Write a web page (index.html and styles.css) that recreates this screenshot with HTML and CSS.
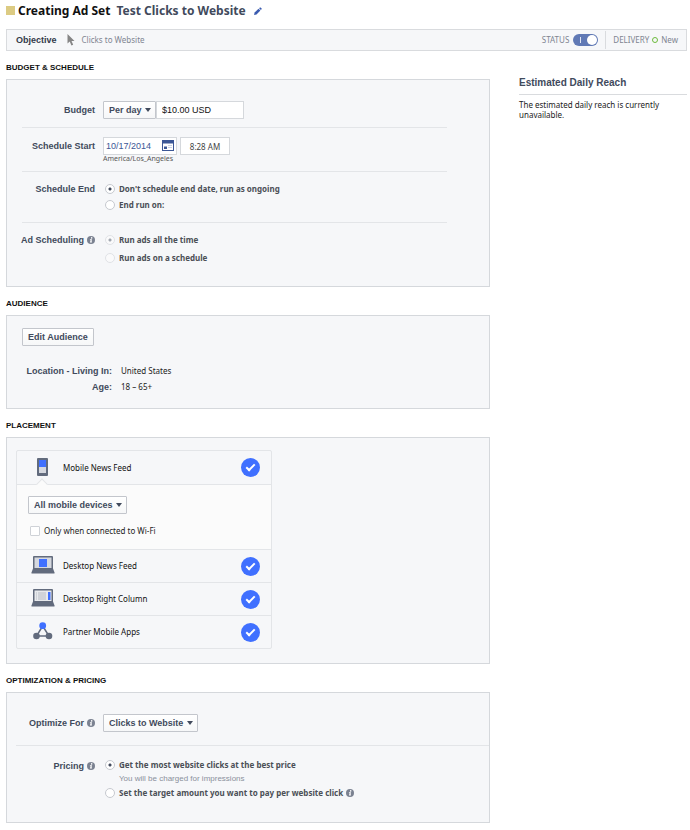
FILE: index.html
```html
<!DOCTYPE html>
<html lang="en">
<head>
<meta charset="utf-8">
<meta name="viewport" content="width=device-width, initial-scale=1">
<title>Creating Ad Set</title>
<link rel="stylesheet" href="styles.css">
</head>
<body>
<svg class="sprite" aria-hidden="true">
  <symbol id="info" viewBox="0 0 16 16"><circle cx="8" cy="8" r="8" fill="#7b8291"/><circle cx="9.3" cy="3.8" r="1.6" fill="#fff"/><path d="M6 6.4h4L8.9 11h1.2l-.4 1.8H5.9L7.2 8H5.7z" fill="#fff"/></symbol>
</svg>

<header class="title">
  <span class="swatch"></span>
  <h1>Creating Ad Set</h1>
  <span class="name">Test Clicks to Website</span>
  <button class="edit" type="button" aria-label="Edit name"><svg viewBox="0 0 16 16"><path d="M0 16l1.2-5L9 3.4l3.8 3.7L5 14.800z" fill="#3a5bb0"/><path d="M10.200 2.300L12.300.3 15.800 3.700 13.800 5.900z" fill="#3a5bb0"/></svg></button>
</header>

<div class="bar">
  <strong>Objective</strong>
  <svg class="cursor" viewBox="0 0 16 24"><path d="M1 0v19l4.500-4 3.300 8 3.600-1.600-3.300-7.600H15z" fill="#858585"/></svg>
  <span class="goal">Clicks to Website</span>
  <label class="status" for="status">STATUS</label>
  <input class="switch" id="status" type="checkbox" role="switch" checked>
  <span class="delivery">DELIVERY <i class="ring"></i> New</span>
</div>

<div class="columns">
<main>
  <h2>BUDGET &amp; SCHEDULE</h2>
  <section class="panel schedule">
    <div class="row budget">
      <label class="label" for="period">Budget</label>
      <div class="controls joined">
        <span class="pick"><select id="period"><option>Per day</option></select></span>
        <input class="text amount" type="text" aria-label="Budget amount" value="$10.00 USD">
      </div>
    </div>
    <div class="row start">
      <label class="label" for="date">Schedule Start</label>
      <div>
        <div class="controls">
          <span class="date"><input class="text" id="date" type="text" value="10/17/2014"><svg viewBox="0 0 24 22"><path d="M0 0h24v22H0z" fill="#3c5796"/><path d="M2 7h20v13H2z" fill="#fff"/><path d="M4 13h6v5H4z" fill="#3c5796"/><path d="M12 10h8v2h-8zM12 14h8v2h-8z" fill="#c9d1e4"/></svg></span>
          <input class="text time" type="text" aria-label="Start time" value="8:28 AM">
        </div>
        <div class="zone">America/Los_Angeles</div>
      </div>
    </div>
    <div class="row end">
      <span class="label" id="end-label">Schedule End</span>
      <div class="choices" role="radiogroup" aria-labelledby="end-label">
        <label><input type="radio" name="end" checked>Don't schedule end date, run as ongoing</label>
        <label><input type="radio" name="end">End run on:</label>
      </div>
    </div>
    <div class="row timing">
      <span class="label" id="timing-label">Ad Scheduling <svg class="info"><use href="#info"/></svg></span>
      <div class="choices loose" role="radiogroup" aria-labelledby="timing-label">
        <label><input type="radio" name="timing" checked disabled>Run ads all the time</label>
        <label><input type="radio" name="timing" disabled>Run ads on a schedule</label>
      </div>
    </div>
  </section>

  <h2>AUDIENCE</h2>
  <section class="panel audience">
    <button class="button" type="button">Edit Audience</button>
    <dl>
      <dt>Location - Living In:</dt><dd>United States</dd>
      <dt>Age:</dt><dd>18 – 65+</dd>
    </dl>
  </section>

  <h2>PLACEMENT</h2>
  <section class="panel placement">
    <div class="places">
      <label class="place open">
        <svg viewBox="0 0 24 20"><path d="M7 0h9q1 0 1 1v16q0 1-1 1H7q-1 0-1-1V1q0-1 1-1z" fill="#626b7d"/><path d="M8 2h7v7H8z" fill="#4070ff"/><path d="M8 9h7v6H8z" fill="#d5d8df"/></svg>
        <span>Mobile News Feed</span><input type="checkbox" checked>
      </label>
      <div class="devices">
        <span class="pick"><select aria-label="Mobile devices"><option>All mobile devices</option></select></span>
        <label class="wifi"><input type="checkbox">Only when connected to Wi-Fi</label>
      </div>
      <label class="place">
        <svg viewBox="0 0 24 20"><path d="M3 0h18q1 0 1 1v12H2V1q0-1 1-1z" fill="#626b7d"/><path d="M3.500 1.500h17V12h-17z" fill="#d5d8df"/><path d="M8 3h8v8H8z" fill="#4070ff"/><path d="M2 12.500h20l1.500 4v1H.500v-1z" fill="#626b7d"/></svg>
        <span>Desktop News Feed</span><input type="checkbox" checked>
      </label>
      <label class="place">
        <svg viewBox="0 0 24 20"><path d="M3 0h18q1 0 1 1v12H2V1q0-1 1-1z" fill="#626b7d"/><path d="M3.500 1.500h17V12h-17z" fill="#e8eaed"/><path d="M5 3h1v8H5zM7 3h8v8H7z" fill="#d0d3d9"/><path d="M17 3h2.500v8H17z" fill="#4070ff"/><path d="M2 12.500h20l1.500 4v1H.500v-1z" fill="#626b7d"/></svg>
        <span>Desktop Right Column</span><input type="checkbox" checked>
      </label>
      <label class="place">
        <svg viewBox="0 0 24 20"><path d="M11.700 4L5.500 14H18z" fill="none" stroke="#626b7d" stroke-width="1.500"/><circle cx="11.700" cy="3.700" r="3.400" fill="#4070ff"/><circle cx="5.500" cy="14" r="3.300" fill="#626b7d"/><circle cx="18" cy="14" r="3.300" fill="#626b7d"/></svg>
        <span>Partner Mobile Apps</span><input type="checkbox" checked>
      </label>
    </div>
  </section>

  <h2>OPTIMIZATION &amp; PRICING</h2>
  <section class="panel">
    <div class="row optimize">
      <label class="label" for="optimize">Optimize For <svg class="info"><use href="#info"/></svg></label>
      <span class="pick"><select id="optimize"><option>Clicks to Website</option></select></span>
    </div>
    <div class="row pricing">
      <span class="label" id="price-label">Pricing <svg class="info"><use href="#info"/></svg></span>
      <div class="choices" role="radiogroup" aria-labelledby="price-label">
        <label><input type="radio" name="price" checked>Get the most website clicks at the best price</label>
        <p class="hint">You will be charged for impressions</p>
        <label><input type="radio" name="price">Set the target amount you want to pay per website click <svg class="info"><use href="#info"/></svg></label>
      </div>
    </div>
  </section>
</main>

<aside>
  <h3>Estimated Daily Reach</h3>
  <p>The estimated daily reach is currently unavailable.</p>
</aside>
</div>
</body>
</html>
```

FILE: styles.css
```css
*, *::before, *::after { box-sizing: border-box; }

:root {
  --humanist: "Lucida Grande", "Noto Sans", sans-serif;
  --grotesque: "Liberation Sans", sans-serif;
  --line: #e3e5e8;
  --ink: #414a5c;
}

body {
  margin: 0;
  padding: 0 3px 6px 6px;
  background: #fff;
  color: #222;
  font: 8px/12px var(--humanist);
}

h1, h2, h3, p, dl, dd { margin: 0; }
button, input, select { margin: 0; font: inherit; color: inherit; }
.sprite { position: absolute; width: 0; height: 0; }

.title {
  display: flex;
  align-items: center;
  height: 21px;
  font: bold 12px/16px var(--humanist);
}
.swatch { width: 9px; height: 9px; margin-right: 3px; background: #dccb83; }
.title h1 { margin-right: 6px; font: inherit; color: #111; }
.title .name { color: var(--ink); }
.edit { display: flex; margin-left: 8px; padding: 0; border: 0; background: none; }
.edit svg { width: 8px; height: 8px; }

.bar {
  display: flex;
  align-items: center;
  height: 22px;
  margin-top: 8px;
  padding: 0 8px 0 9px;
  border: 1px solid #d9dbde;
  background: #f6f7f9;
  color: #7f8591;
}
.bar strong { font: bold 9px/12px var(--grotesque); color: #333b4b; }
.cursor { width: 8px; height: 12px; margin: 0 7px 0 10px; }
.status { margin-left: auto; }
.switch {
  appearance: none;
  position: relative;
  width: 25px;
  height: 12px;
  margin: 0 7px 0 4px;
  border-radius: 6px;
  background: #6079b5;
}
.switch::before, .switch::after { content: ""; position: absolute; }
.switch::before { left: 7px; top: 3px; width: 1px; height: 6px; background: #dfe5f2; }
.switch::after { right: 1px; top: 1px; width: 10px; height: 10px; border-radius: 50%; background: #fff; }
.delivery { display: flex; align-items: center; gap: 3px; height: 18px; padding-left: 7px; border-left: 1px solid #d9dbde; }
.ring { width: 6px; height: 6px; border: 1px solid #6cbb3c; border-radius: 50%; }

.columns { display: flex; align-items: flex-start; gap: 29px; }
main { flex: 1; min-width: 0; }
aside { width: 168px; padding-top: 25px; color: #222; }
aside h3 {
  margin-bottom: 5px;
  padding-bottom: 4px;
  border-bottom: 1px solid #d9dbde;
  font: bold 10px/14px var(--grotesque);
  color: var(--ink);
}
aside p { line-height: 10px; }

h2 { margin: 11px 0 5px; font: bold 8px/12px var(--grotesque); color: #111; }

.panel { border: 1px solid #d5d8dc; background: #f6f7f9; }
.schedule { padding: 0 42px 0 15px; }

.row { display: grid; grid-template-columns: 73px 1fr; column-gap: 8px; border-bottom: 1px solid var(--line); }
.row:last-child { border-bottom: 0; }
.label {
  display: flex;
  justify-content: flex-end;
  align-items: center;
  gap: 3px;
  height: 18px;
  font: bold 9px/18px var(--grotesque);
  color: var(--ink);
  white-space: nowrap;
}
.info { width: 8px; height: 8px; flex: none; }

.controls { display: flex; gap: 3px; }
.joined { gap: 0; }
.budget { padding: 21px 0 8px; }
.start { padding: 9px 0 8px; }
.end { padding: 9px 0 9px; }
.timing { padding: 8px 0 19px; }

.pick { position: relative; display: inline-flex; justify-self: start; }
.pick::after {
  content: "";
  position: absolute;
  right: 5px;
  top: 7px;
  border: 3px solid transparent;
  border-top: 4px solid var(--ink);
  border-bottom: 0;
  pointer-events: none;
}
.pick select, .button {
  appearance: none;
  height: 18px;
  border: 1px solid #c3c6cc;
  border-radius: 1px;
  background: linear-gradient(#fff, #f6f7f8);
  color: var(--ink);
  font: bold 9px/14px var(--grotesque);
}
.pick select { padding: 0 13px 0 5px; }
.button { padding: 0 5px; }

.text {
  width: 50px;
  height: 18px;
  padding: 0 5px;
  border: 1px solid #d5d8dc;
  background: #fff;
}
.amount { width: 88px; font: 9px var(--grotesque); color: #111; }
.date { position: relative; display: flex; }
.date .text { width: 74px; padding: 0 2px; font: 9px var(--grotesque); color: #3c5796; }
.date svg { position: absolute; right: 3px; top: 3px; width: 12px; height: 11px; }
.time { padding: 0 2px; text-align: center; color: #444; }
.zone { font-size: 7px; line-height: 8px; color: #555; }

.choices label { display: flex; align-items: center; height: 16px; font-weight: bold; color: #4b4f56; }
.choices.loose label { height: 18px; }
.choices .info { margin-left: 3px; }
input[type="radio"] {
  appearance: none;
  width: 10px;
  height: 10px;
  margin: 0 4px 0 2px;
  border: 1px solid #c6c9cf;
  border-radius: 50%;
  background: #fff;
}
input[type="radio"]:checked { background: radial-gradient(circle, #414a5c 0 1px, #fff 2px); }
input[type="radio"]:disabled { opacity: .45; }
.end .label { height: 16px; }

.audience { padding: 12px 15px 13px; }
.audience dl {
  display: grid;
  grid-template-columns: 90px 1fr;
  column-gap: 9px;
  margin-top: 17px;
  line-height: 16px;
}
.audience .button { display: block; }
dt { text-align: right; font: bold 9px/16px var(--grotesque); color: var(--ink); }

.placement { padding: 12px 9px 14px; }
.places { width: 256px; max-width: 100%; border: 1px solid var(--line); border-radius: 2px; }
.place { display: flex; align-items: center; height: 33px; padding: 0 11px 0 14px; color: #111; }
.devices ~ .place { border-top: 1px solid var(--line); }
.place svg { width: 24px; height: 20px; margin-right: 8px; }
.place span { flex: 1; }
.place input {
  appearance: none;
  position: relative;
  width: 19px;
  height: 19px;
  border-radius: 50%;
  background: #4070ff;
}
.place input::after {
  content: "";
  position: absolute;
  left: 7px;
  top: 4px;
  width: 5px;
  height: 9px;
  border: solid #fff;
  border-width: 0 2px 2px 0;
  transform: rotate(45deg);
}
.devices { position: relative; height: 65px; padding: 11px; border-top: 1px solid var(--line); background: #fbfbfb; }
.devices::before {
  content: "";
  position: absolute;
  left: 21px;
  top: -5px;
  width: 8px;
  height: 8px;
  border: solid var(--line);
  border-width: 1px 0 0 1px;
  background: #fbfbfb;
  transform: rotate(45deg);
}
.devices .pick { display: flex; width: fit-content; }
.wifi { display: flex; align-items: center; margin-top: 11px; }
.wifi input { appearance: none; width: 10px; height: 10px; margin: 0 4px 0 2px; border: 1px solid #cfd2d7; border-radius: 1px; background: #fff; }

.optimize { margin-left: 9px; padding: 21px 0 13px; grid-template-columns: 79px 1fr; }
.pricing { margin-left: 9px; padding: 11px 0 21px; grid-template-columns: 79px 1fr; }
.hint { padding-left: 16px; font: 8px/12px var(--grotesque); color: #8a909c; }
```
